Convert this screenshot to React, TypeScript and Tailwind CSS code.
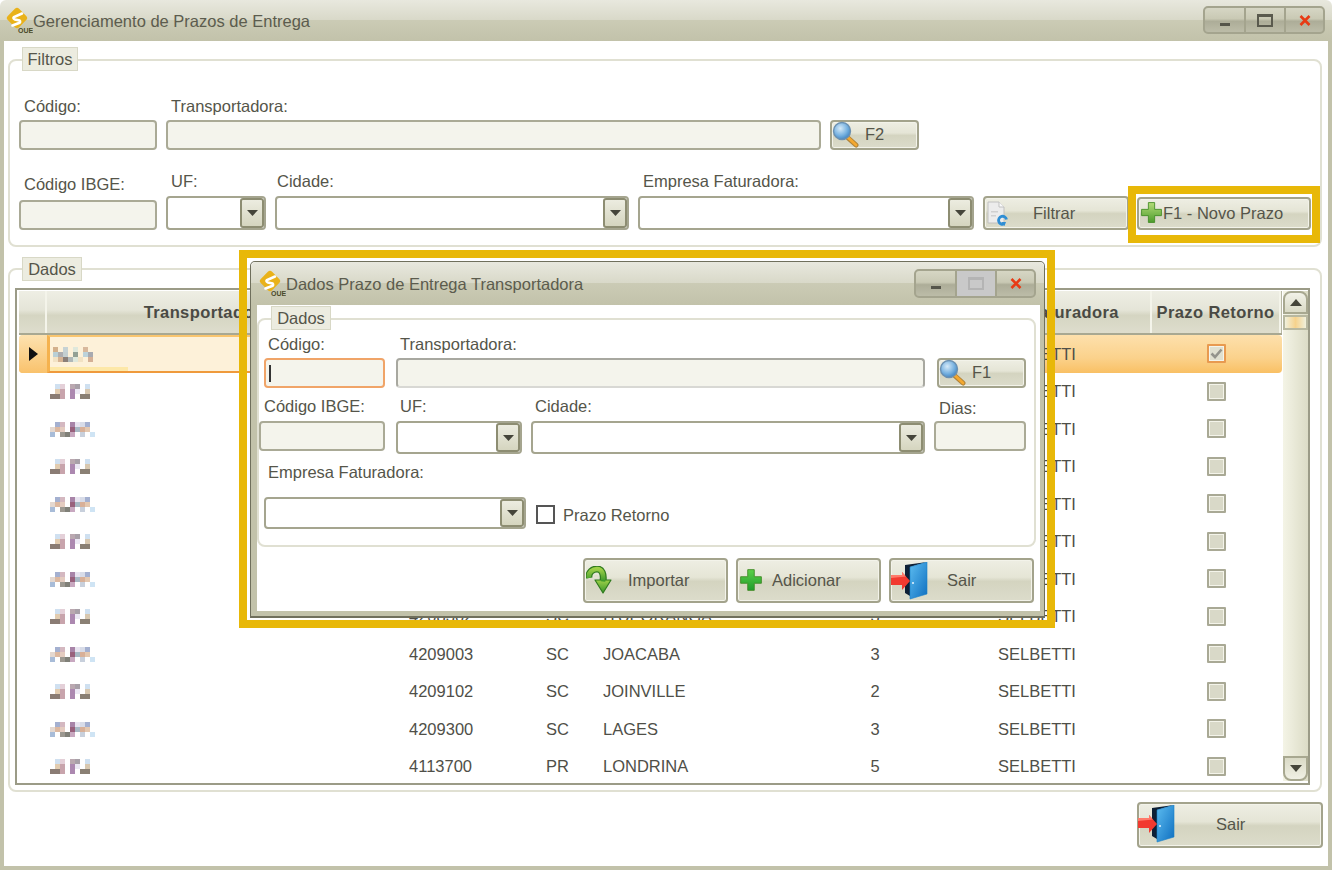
import React from "react";

const btn = "flex items-center relative rounded-[4px] border-2 border-[#a3a38c] pb-[2px] bg-[linear-gradient(180deg,#eeeee3_0%,#e5e5d6_42%,#d4d4c0_52%,#dcdccb_100%)] text-[#55554a] shadow-[inset_0_0_0_1px_#f3f3ea]";
const input = "rounded-[4px] border-2 border-[#aaaa96] bg-[#f4f4ec]";
const head = "flex items-center justify-center font-bold tracking-[0.4px] text-[#4a4a44] border-r-2 border-[#f4f4ea] shadow-[1px_0_0_#b8b8a4] bg-[linear-gradient(180deg,#eeeee4_0%,#e5e5d8_45%,#d5d5c2_58%,#deddcd_100%)] overflow-hidden whitespace-nowrap";

function Logo() {
  return (
    <svg width="28" height="28" viewBox="0 0 28 28">
      <rect x="4" y="3" width="16" height="16" rx="3" fill="#e9b21a" transform="rotate(45 12 11)" />
      <path d="M17 6.5 L9 10 Q7.5 11.5 10 12.5 L14.5 13.5 Q16 15 14 16 L7.5 18.5" fill="none" stroke="#fff" strokeWidth="2.6" strokeLinecap="round" />
      <text x="13" y="26" fontSize="7" fontWeight="700" fill="#4a4a2a" fontFamily="Liberation Sans, sans-serif">OUE</text>
    </svg>
  );
}

function Magnifier() {
  return (
    <svg width="27" height="27" viewBox="0 0 27 27">
      <defs>
        <radialGradient id="lens" cx="0.4" cy="0.35" r="0.75">
          <stop offset="0" stopColor="#d6eaf8" />
          <stop offset="0.55" stopColor="#78b2e0" />
          <stop offset="1" stopColor="#2f78bc" />
        </radialGradient>
      </defs>
      <path d="M15 16 L24 24" stroke="#b0843a" strokeWidth="5" strokeLinecap="round" />
      <path d="M16 16.5 L24 24" stroke="#f4a830" strokeWidth="2.8" strokeLinecap="round" />
      <circle cx="10" cy="10" r="8.5" fill="url(#lens)" stroke="#6c90b0" strokeWidth="1.4" />
    </svg>
  );
}

function Plus({ id, size, a, b }: { id: string; size: number; a: string; b: string }) {
  return (
    <svg width={size} height={size} viewBox="0 0 22 22">
      <defs>
        <linearGradient id={id} x1="0" y1="0" x2="0" y2="1">
          <stop offset="0" stopColor={a} />
          <stop offset="1" stopColor={b} />
        </linearGradient>
      </defs>
      <path d="M8 1.5 H14 V8 H20.5 V14 H14 V20.5 H8 V14 H1.5 V8 H8 Z" fill={`url(#${id})`} stroke="#3e8a22" strokeWidth="0.8" strokeLinejoin="round" />
    </svg>
  );
}

function DocRefresh() {
  return (
    <svg width="24" height="28" viewBox="0 0 24 28">
      <path d="M2 3 H13 L18 8 V24 H2 Z" fill="#ececec" stroke="#c0c0c0" strokeWidth="1" />
      <path d="M13 3 V8 H18" fill="#fafafa" stroke="#c0c0c0" strokeWidth="1" />
      <rect x="5" y="12" width="7" height="1.5" fill="#d0d0d0" />
      <rect x="5" y="16" width="5" height="1.5" fill="#d0d0d0" />
      <path d="M20.5 20.5 A4 4 0 1 0 18 25" fill="none" stroke="#2f8ed4" strokeWidth="2.8" />
      <path d="M15.5 23 L20 23 L18.5 27 Z" fill="#2f8ed4" />
    </svg>
  );
}

function ImportArrow() {
  return (
    <svg width="26" height="30" viewBox="0 0 26 30">
      <defs>
        <linearGradient id="imp" x1="0" y1="0" x2="0" y2="1">
          <stop offset="0" stopColor="#9ed048" />
          <stop offset="1" stopColor="#37962a" />
        </linearGradient>
      </defs>
      <path d="M3 12 C2 6 7 3 11 3 C16 3 18 8 17 15" fill="none" stroke="#2f7a1e" strokeWidth="7" />
      <path d="M8 24 L1 15 L7 13 Z" fill="none" />
      <path d="M9 14 L25 14 L17 27 Z" fill="url(#imp)" stroke="#2f7a1e" strokeWidth="1.2" strokeLinejoin="round" />
      <path d="M3 12 C2 6 7 3 11 3 C16 3 18 8 17 15.5" fill="none" stroke="url(#imp)" strokeWidth="4.6" />
      <path d="M8.5 11 C9 9 12 9 12.5 12" fill="none" stroke="#e0e0cc" strokeWidth="1.6" />
    </svg>
  );
}

function Door({ id }: { id: string }) {
  return (
    <svg width="40" height="38" viewBox="0 0 40 38">
      <defs>
        <linearGradient id={id} x1="0" y1="0" x2="1" y2="1">
          <stop offset="0" stopColor="#5cbcf0" />
          <stop offset="1" stopColor="#0f6fc0" />
        </linearGradient>
      </defs>
      <path d="M16 3 L38 0 L21 5 V34 L16 31 Z" fill="#0e2036" />
      <path d="M21 5 L38 0 V32 L21 37 Z" fill={`url(#${id})`} stroke="#1a80c8" strokeWidth="0.6" />
      <circle cx="24" cy="21" r="1" fill="#e8f4ff" />
      <path d="M2 13 H13 V10 L21 19 L13 28 V23 H2 Z" fill="#f23a30" />
      <path d="M2 13 H13 V10 L17 14.5 L2 16 Z" fill="#ff7a6a" />
    </svg>
  );
}

function Tri({ up }: { up?: boolean }) {
  return (
    <svg width="12" height="7" viewBox="0 0 12 7">
      <path d={up ? "M6 0 L12 7 H0 Z" : "M0 0 H12 L6 7 Z"} fill="#45453a" />
    </svg>
  );
}

function Combo({ cls }: { cls: string }) {
  return (
    <div className={`flex rounded-[4px] border-2 border-[#a5a58f] bg-white overflow-hidden ${cls}`}>
      <div className="flex-1" />
      <div className="w-[24px] flex items-center justify-center border-2 border-[#8d8d72] rounded-[3px] bg-[linear-gradient(180deg,#ecece0,#d5d5bf)]">
        <svg width="11" height="6" viewBox="0 0 11 6"><path d="M0 0 H11 L5.5 6 Z" fill="#45453a" /></svg>
      </div>
    </div>
  );
}

function Legend({ text, cls }: { text: string; cls: string }) {
  return (
    <div className={`absolute flex items-center justify-center bg-[#ecece0] border border-[#d8d8c6] text-[#55554a] ${cls}`}>{text}</div>
  );
}

function WinButtons({ disabledMax }: { disabledMax?: boolean }) {
  return (
    <div className="flex h-full w-[122px] rounded-[5px] border-2 border-[#a4a48e] overflow-hidden bg-[linear-gradient(180deg,#d6d6c4_0%,#c9c9b4_45%,#adad98_55%,#bcbca8_100%)]">
      <div className="w-[41px] flex items-center justify-center border-r-2 border-[#a4a48e] pt-[8px]">
        <div className="w-[10px] h-[3px] bg-[#55554a]" />
      </div>
      <div className={`w-[40px] flex items-center justify-center border-r-2 border-[#a4a48e] ${disabledMax ? "bg-[#c9c9c9]" : ""}`}>
        <div className={`w-[16px] h-[13px] border-2 border-t-[3px] ${disabledMax ? "border-[#b4b4b4]" : "border-[#5a5a4e]"}`} />
      </div>
      <div className="flex-1 flex items-center justify-center">
        <svg width="12" height="11" viewBox="0 0 12 11"><path d="M1.5 1 L10.5 10 M10.5 1 L1.5 10" stroke="#e83a14" strokeWidth="2.6" /></svg>
      </div>
    </div>
  );
}

const mosaicA = [
  ["#d3b08c", "", "#c6d2d4", "", "#dfe8dc", "", "#d8b89c", "", ""],
  ["#b9cfd6", "#aeaeb0", "#c4cfd0", "", "#93a094", "", "#bcd2da", "#a8aab0", ""],
  ["#f2e2c4", "#d6b494", "#8a7f78", "#b0b8b8", "#dfe8dc", "#f2e2c4", "", "#d4b096", ""],
];
const mosaicB = [
  ["", "#d0e0f0", "#e4d0d8", "", "#baa8b0", "#a8a0a8", "", "#cfe0f0", ""],
  ["", "#e2ccb0", "#c8a4ac", "", "#ac88b0", "#ece8f4", "", "#d8c8b0", ""],
  ["#8a7c74", "#8a7c74", "#c8a4ac", "", "#ac88b0", "", "#8a8074", "#8a8074", ""],
];
const mosaicC = [
  ["", "#a4b0d0", "#d4b8c0", "", "#a884a8", "#e8e4f0", "#d8dce8", "#a4b0d0", ""],
  ["#e4d8d0", "#dcb8a0", "#e4ccc0", "", "#98607c", "#a8b8c4", "#d8b098", "#e4c8b0", ""],
  ["#a8bcd8", "", "#9c9890", "#808078", "#c8a8c0", "", "#c8d0dc", "", "#cfe4f4"],
];

function Mosaic({ data }: { data: string[][] }) {
  return (
    <svg width="45" height="15" viewBox="0 0 45 15" className="blur-[0.5px]">
      {data.map((r, y) => r.map((c, x) => (c ? <rect key={`${x}-${y}`} x={x * 5} y={y * 5} width="5" height="5" fill={c} /> : null)))}
    </svg>
  );
}

function Check({ on }: { on?: boolean }) {
  return (
    <div className={`w-[19px] h-[19px] flex items-center justify-center border-2 ${on ? "border-[#e89a50] bg-[#e0e0d0]" : "border-[#a9a995] bg-[#d9d9c8]"} shadow-[inset_0_0_0_1px_#f4f4ea] rounded-[1px]`}>
      {on && (
        <svg width="13" height="11" viewBox="0 0 13 11"><path d="M1.5 5.5 L5 9 L11.5 1.5" fill="none" stroke="#94948c" strokeWidth="2.6" /></svg>
      )}
    </div>
  );
}

const rows = [
  ["", "", "", ""],
  ["", "", "", ""],
  ["", "", "", ""],
  ["", "", "", ""],
  ["", "", "", ""],
  ["", "", "", ""],
  ["", "", "", ""],
  ["4208302", "SC", "ITUPORANGA", "3"],
  ["4209003", "SC", "JOACABA", "3"],
  ["4209102", "SC", "JOINVILLE", "2"],
  ["4209300", "SC", "LAGES", "3"],
  ["4113700", "PR", "LONDRINA", "5"],
];

function Row({ r, i }: { r: string[]; i: number }) {
  const sel = i === 0;
  return (
    <div className={`grid grid-cols-[28px_362px_137px_57px_247px_50px_98px_154px_130px] h-[37.5px] items-center text-[#4f4f48] ${sel ? "rounded-[4px] bg-[linear-gradient(180deg,#fde0ac_0%,#fbd28c_60%,#f9c064_100%)]" : ""}`}>
      <div className={`h-full flex items-center justify-center ${sel ? "rounded-l-[4px] bg-[linear-gradient(180deg,#fde2b0,#f9c26c)]" : ""}`}>
        {sel && <svg width="9" height="14" viewBox="0 0 9 14"><path d="M0 0 L9 7 L0 14 Z" fill="#111" /></svg>}
      </div>
      <div className={`relative h-full flex items-center pl-[3px] pt-[1px] ${sel ? "bg-[#fdf1d9] border-2 border-l-[3px] border-[#f5b24e] border-t-[#f9c56e] border-b-[#ef9a3c]" : ""}`}>
        <Mosaic data={sel ? mosaicA : i % 2 ? mosaicB : mosaicC} />
        {sel && <div className="absolute left-0 bottom-0 w-[78px] h-[4px] bg-[#fde8a8]" />}
      </div>
      <div>{r[0]}</div>
      <div>{r[1]}</div>
      <div>{r[2]}</div>
      <div className="text-center">{r[3]}</div>
      <div />
      <div>SELBETTI</div>
      <div className="flex justify-center pr-[1px]"><Check on={sel} /></div>
    </div>
  );
}

export default function App() {
  return (
    <div className="relative w-[1332px] h-[870px] overflow-hidden bg-white flex flex-col text-[16.5px] leading-[20px] text-[#55554a] font-['Liberation_Sans',Arial,sans-serif]">
      {/* Title bar */}
      <div className="h-[41px] shrink-0 flex items-center rounded-t-[6px] pl-[5px] pr-[7px] bg-[linear-gradient(180deg,#e8e8de_0%,#d9d9c9_48%,#cbcbb5_50%,#c2c2aa_100%)]">
        <Logo />
        <span className="text-[#5c5c4e]">Gerenciamento de Prazos de Entrega</span>
        <div className="ml-auto h-[28px] -mt-[1px]"><WinButtons /></div>
      </div>

      {/* Client area */}
      <div className="flex-1 flex flex-col border-x-4 border-b-4 border-[#c2c2aa] pl-[4px] pr-[6px] bg-white">
        {/* Filtros */}
        <div className="relative mt-[18px] h-[188px] shrink-0 rounded-[8px] border-2 border-[#e0e0d2] pl-[9px] pt-[35px]">
          <Legend text="Filtros" cls="left-[12px] -top-[14px] w-[56px] h-[24px]" />
          <div className="flex items-end gap-[9px]">
            <div className="w-[138px]">
              <div className="h-[24px] pl-[5px]">Código:</div>
              <div className={`h-[30px] ${input}`} />
            </div>
            <div className="w-[655px]">
              <div className="h-[24px] pl-[5px]">Transportadora:</div>
              <div className={`h-[30px] ${input}`} />
            </div>
            <div className={`${btn} w-[89px] h-[30px]`}>
              <div className="absolute left-0 -top-[1px]"><Magnifier /></div>
              <span className="ml-[33px]">F2</span>
            </div>
          </div>
          <div className="flex items-start mt-[21px] gap-[9px]">
            <div className="w-[138px] pt-[3px]">
              <div className="h-[26px] pl-[5px]">Código IBGE:</div>
              <div className={`h-[30px] ${input}`} />
            </div>
            <div className="w-[100px]">
              <div className="h-[25px] pl-[5px]">UF:</div>
              <Combo cls="h-[34px]" />
            </div>
            <div className="w-[354px]">
              <div className="h-[25px] pl-[2px]">Cidade:</div>
              <Combo cls="h-[34px]" />
            </div>
            <div className="w-[336px]">
              <div className="h-[25px] pl-[5px]">Empresa Faturadora:</div>
              <Combo cls="h-[34px]" />
            </div>
            <div className={`${btn} w-[146px] h-[34px] mt-[25px]`}>
              <div className="absolute left-[1px] top-[1px]"><DocRefresh /></div>
              <span className="ml-[48px] pt-[2px]">Filtrar</span>
            </div>
            <div className={`${btn} w-[174px] h-[33px] mt-[26px] -ml-[1px]`}>
              <div className="ml-[1px] shrink-0"><Plus id="p1" size={23} a="#b4dc78" b="#4c9c2c" /></div>
              <span className="whitespace-nowrap">F1 - Novo Prazo</span>
            </div>
          </div>
        </div>

        {/* Dados */}
        <div className="relative mt-[21px] h-[524px] shrink-0 rounded-[8px] border-2 border-[#e0e0d2] pl-[5px] pt-[18px]">
          <Legend text="Dados" cls="left-[12px] -top-[13px] w-[60px] h-[24px]" />
          <div className="w-[1295px] h-[497px] border-2 border-[#9b9b87] pl-[2px] pt-[1px] flex gap-[1px] overflow-hidden">
            <div className="w-[1263px] shrink-0">
              <div className="grid grid-cols-[28px_322px_151px_70px_250px_80px_232px_129px] h-[44px] border-b-2 border-[#a8a892]">
                <div className={head} />
                <div className={head}>Transportadora</div>
                <div className={head} />
                <div className={head} />
                <div className={head} />
                <div className={head} />
                <div className={head}>Empresa Faturadora</div>
                <div className={head}>Prazo Retorno</div>
              </div>
              {rows.map((r, i) => <Row key={i} r={r} i={i} />)}
            </div>
            <div className="w-[25px] h-[490px] flex flex-col bg-[linear-gradient(90deg,#f4f4e6,#dcdcc6)]">
              <div className="h-[23px] shrink-0 flex items-center justify-center rounded-t-[8px] border-2 border-[#a8a890] bg-[linear-gradient(180deg,#f2f2e8,#dadac6)]"><Tri up /></div>
              <div className="h-[15px] shrink-0 mt-[1px] border-2 border-[#b8b8a0] bg-[linear-gradient(90deg,#f0f0dc,#f6d28c_50%,#f0f0dc)]" />
              <div className="flex-1" />
              <div className="h-[25px] shrink-0 flex items-center justify-center rounded-b-[8px] border-2 border-[#a8a890] bg-[linear-gradient(180deg,#dadac6,#f0f0e4)]"><Tri /></div>
            </div>
          </div>
        </div>

        {/* Sair */}
        <div className={`${btn} ml-[1129px] mt-[10px] w-[186px] h-[46px] shrink-0`}>
          <div className="absolute -left-[3px] top-[1px]"><Door id="d1" /></div>
          <span className="ml-[77px]">Sair</span>
        </div>
      </div>

      {/* Highlight around Novo Prazo */}
      <div className="absolute left-[1128px] top-[186px] w-[192px] h-[57px] border-8 border-[#e8b808] pointer-events-none" />

      {/* Highlight + dialog */}
      <div className="absolute left-[239px] top-[250px] w-[816px] h-[378px] border-8 border-[#e8b808] pl-[3px] pt-[3px]">
        <div className="w-[795px] h-[357px] flex flex-col rounded-t-[5px] border border-[#6f6f5c] border-b-2 bg-white">
          <div className="h-[43px] shrink-0 flex items-center pl-[7px] pr-[8px] bg-[linear-gradient(180deg,#e8e8de_0%,#d9d9c9_48%,#cbcbb5_50%,#c2c2aa_100%)] rounded-t-[5px]">
            <Logo />
            <span className="text-[#5c5c4e]">Dados Prazo de Entrega Transportadora</span>
            <div className="ml-auto h-[29px]"><WinButtons disabledMax /></div>
          </div>
          <div className="flex-1 border-l-[6px] border-r-[4px] border-b-[5px] border-[#c2c2aa] flex flex-col">
            <div className="relative mt-[13px] w-[779px] h-[229px] shrink-0 rounded-[8px] border-2 border-[#e0e0d2] pt-[14px]">
              <Legend text="Dados" cls="left-[12px] -top-[14px] w-[60px] h-[24px]" />
              <div className="flex items-end pl-[5px]">
                <div className="w-[121px]">
                  <div className="h-[24px] pl-[4px]">Código:</div>
                  <div className="h-[30px] rounded-[4px] border-2 border-[#f0a468] bg-[#f4f4ec] flex items-center pl-[3px]">
                    <div className="w-[2px] h-[17px] bg-[#333]" />
                  </div>
                </div>
                <div className="w-[529px] ml-[11px]">
                  <div className="h-[24px] pl-[4px]">Transportadora:</div>
                  <div className="h-[30px] rounded-[4px] border-2 border-[#a8a8a0] border-b-[#d8d8d4] bg-[#f4f4ec]" />
                </div>
                <div className={`${btn} w-[89px] h-[30px] ml-[12px]`}>
                  <div className="absolute left-0 -top-[1px]"><Magnifier /></div>
                  <span className="ml-[33px]">F1</span>
                </div>
              </div>
              <div className="flex items-start mt-[8px]">
                <div className="w-[126px]">
                  <div className="h-[25px] pl-[5px]">Código IBGE:</div>
                  <div className={`h-[30px] ${input}`} />
                </div>
                <div className="w-[126px] ml-[11px]">
                  <div className="h-[25px] pl-[4px]">UF:</div>
                  <Combo cls="h-[33px]" />
                </div>
                <div className="w-[394px] ml-[9px]">
                  <div className="h-[25px] pl-[4px]">Cidade:</div>
                  <Combo cls="h-[33px]" />
                </div>
                <div className="w-[92px] ml-[9px] pt-[2px]">
                  <div className="h-[23px] pl-[5px]">Dias:</div>
                  <div className={`h-[30px] ${input}`} />
                </div>
              </div>
              <div className="mt-[8px] h-[20px] pl-[9px]">Empresa Faturadora:</div>
              <div className="flex items-center mt-[15px] pl-[5px]">
                <Combo cls="w-[262px] h-[32px]" />
                <div className="w-[19px] h-[19px] ml-[10px] mt-[2px] border-2 border-[#555] bg-white" />
                <span className="ml-[8px] mt-[4px]">Prazo Retorno</span>
              </div>
            </div>
            <div className="flex ml-[326px] mt-[11px] gap-[8px]">
              <div className={`${btn} w-[145px] h-[45px]`}>
                <div className="absolute left-[1px] top-[6px]"><ImportArrow /></div>
                <span className="ml-[43px]">Importar</span>
              </div>
              <div className={`${btn} w-[145px] h-[45px]`}>
                <div className="ml-[1px]"><Plus id="p2" size={24} a="#5cd048" b="#1f9c2c" /></div>
                <span className="ml-[9px]">Adicionar</span>
              </div>
              <div className={`${btn} w-[145px] h-[45px]`}>
                <div className="absolute -left-[2px] top-[2px]"><Door id="d2" /></div>
                <span className="ml-[56px]">Sair</span>
              </div>
            </div>
          </div>
        </div>
      </div>
    </div>
  );
}
